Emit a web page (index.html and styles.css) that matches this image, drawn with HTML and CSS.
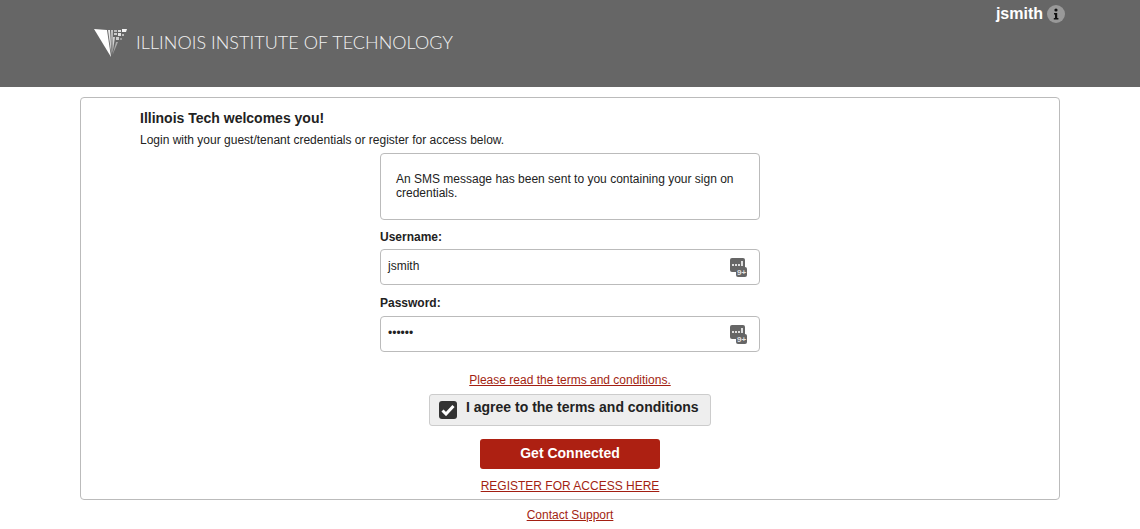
FILE: index.html
```html
<!DOCTYPE html>
<html lang="en">
<head>
  <meta charset="UTF-8" />
  <title>Illinois Tech Guest Access</title>
  <link rel="stylesheet" href="styles.css">
</head>
<body>
  <header class="topbar">
    <div class="brand">
      <svg class="brand-mark" width="34" height="30" viewBox="0 0 34 30">
        <polygon points="0,1 13,2 17,29" fill="#fff"/>
        <polygon points="14,2 16,2 17.5,27" fill="#e8e8e8"/>
        <polygon points="17,2 19,2 18,26" fill="#c8c8c8"/>
        <polygon points="19,9 21,9 18.5,25" fill="#d0d0d0"/>
        <polygon points="22,14 24,14 18.5,27" fill="#aaa"/>
        <rect x="20" y="2" width="3" height="2" fill="#bbb"/>
        <rect x="24" y="2" width="3" height="2" fill="#ddd"/>
        <polygon points="28,1 33,1 32,4 28,4" fill="#f4f4f4"/>
        <rect x="20" y="5" width="3" height="2" fill="#ccc"/>
        <rect x="24" y="5" width="3" height="3" fill="#e4e4e4"/>
        <rect x="28" y="6" width="2" height="2" fill="#bbb"/>
        <rect x="22" y="9" width="3" height="3" fill="#ccc"/>
        <rect x="26" y="10" width="2" height="2" fill="#999"/>
      </svg>
      <span class="brand-name">ILLINOIS INSTITUTE OF TECHNOLOGY</span>
    </div>
    <div class="user">
      <span class="user-name">jsmith</span>
      <span class="info-icon">
        <svg width="18" height="18" viewBox="0 0 18 18">
          <circle cx="9" cy="9" r="9" fill="#999"/>
          <circle cx="9" cy="5" r="1.6" fill="#111"/>
          <path d="M7 8h3.2v5H11.4v1.4H6.8V13H8V9.4H7z" fill="#111"/>
        </svg>
      </span>
    </div>
  </header>

  <main class="card">
    <h1 class="welcome">Illinois Tech welcomes you!</h1>
    <p class="intro">Login with your guest/tenant credentials or register for access below.</p>

    <form class="login">
      <div class="notice">An SMS message has been sent to you containing your sign on credentials.</div>

      <label class="field-label">Username:</label>
      <div class="field">
        <span class="field-value">jsmith</span>
        <svg class="field-icon" width="17" height="19" viewBox="0 0 17 19">
          <rect x="0" y="0" width="15" height="14" rx="2" fill="#666"/>
          <rect x="6" y="9" width="11" height="10" rx="2" fill="#666"/>
          <path d="M2 6h2v2H2zM5 6h2v2H5zM8 6h2v2H8zM11 3h2v5h-2z" fill="#ddd"/>
          <text x="7" y="17" class="sms-count">9+</text>
        </svg>
      </div>

      <label class="field-label field-label-second">Password:</label>
      <div class="field">
        <span class="field-value">••••••</span>
        <svg class="field-icon" width="17" height="19" viewBox="0 0 17 19">
          <rect x="0" y="0" width="15" height="14" rx="2" fill="#666"/>
          <rect x="6" y="9" width="11" height="10" rx="2" fill="#666"/>
          <path d="M2 6h2v2H2zM5 6h2v2H5zM8 6h2v2H8zM11 3h2v5h-2z" fill="#ddd"/>
          <text x="7" y="17" class="sms-count">9+</text>
        </svg>
      </div>

      <a class="terms-link" href="#">Please read the terms and conditions.</a>

      <div class="agree">
        <span class="checkbox">
          <svg width="14" height="12" viewBox="0 0 14 12">
            <path d="M1.5 6.5 5 10l7.5-8" fill="none" stroke="#fff" stroke-width="3"/>
          </svg>
        </span>
        <span class="agree-text">I agree to the terms and conditions</span>
      </div>

      <button class="connect" type="button">Get Connected</button>
      <a class="register" href="#">REGISTER FOR ACCESS HERE</a>
    </form>
  </main>

  <footer class="support">
    <a href="#">Contact Support</a>
  </footer>
</body>
</html>
```

FILE: styles.css
```css
html, body {
  height: 100%;
}

body {
  margin: 0;
  font-family: "Liberation Sans", Arial, sans-serif;
  font-size: 12px;
  color: #222;
  background: #fff;
  overflow: hidden;
}

.sms-count {
  font-family: "Liberation Sans", Arial, sans-serif;
  font-size: 8px;
  font-weight: bold;
  fill: #e4e4e4;
}

.topbar {
  height: 87px;
  background: #666;
  display: flex;
  justify-content: space-between;
  align-items: flex-start;
  padding: 0 75px 0 94px;
  box-sizing: border-box;
}

.brand {
  display: flex;
  align-items: flex-start;
  gap: 8px;
  padding-top: 28px;
}

.brand-mark {
  display: block;
}

.brand-name {
  margin-top: 3px;
  font-family: Lato, sans-serif;
  font-weight: 300;
  font-size: 18px;
  line-height: 22px;
  letter-spacing: 0.04px;
  color: #f2f2f2;
}

.user {
  display: flex;
  align-items: center;
  gap: 4px;
  padding-top: 5px;
}

.user-name {
  color: #fff;
  font-size: 16px;
  font-weight: bold;
}

.info-icon {
  display: flex;
}

.card {
  width: 980px;
  height: 403px;
  box-sizing: border-box;
  margin: 10px auto 0;
  padding: 12px 59px 0;
  border: 1px solid #bbb;
  border-radius: 4px;
}

.welcome {
  margin: 0;
  font-size: 14px;
  line-height: 17px;
  font-weight: bold;
}

.intro {
  margin: 5px 0 0;
  line-height: 16px;
}

.login {
  width: 380px;
  margin: 5px auto 0;
  display: flex;
  flex-direction: column;
  align-items: center;
}

.notice {
  width: 100%;
  height: 67px;
  box-sizing: border-box;
  padding: 18px 15px 0;
  border: 1px solid #bbb;
  border-radius: 4px;
  line-height: 14px;
}

.field-label {
  align-self: flex-start;
  margin-top: 10px;
  line-height: 14px;
  font-weight: bold;
}

.field-label-second {
  margin-top: 11px;
}

.field {
  width: 100%;
  height: 36px;
  box-sizing: border-box;
  margin-top: 5px;
  padding: 0 12px 0 7px;
  display: flex;
  align-items: center;
  justify-content: space-between;
  border: 1px solid #bbb;
  border-radius: 4px;
}

.field-label-second + .field {
  margin-top: 6px;
}

.field-value {
  margin-top: -2px;
  line-height: 14px;
}

.terms-link,
.register,
.support a {
  color: #a31f12;
  text-decoration: underline;
}

.terms-link {
  margin-top: 21px;
  line-height: 14px;
}

.agree {
  width: 282px;
  height: 32px;
  box-sizing: border-box;
  margin-top: 7px;
  padding: 0 9px;
  display: flex;
  align-items: center;
  gap: 9px;
  background: #eee;
  border: 1px solid #ccc;
  border-radius: 3px;
}

.checkbox {
  width: 18px;
  height: 18px;
  display: flex;
  align-items: center;
  justify-content: center;
  background: #333;
  border-radius: 3px;
}

.agree-text {
  font-size: 14px;
  font-weight: bold;
  white-space: nowrap;
  margin-top: -7px;
}

.connect {
  width: 180px;
  height: 30px;
  margin-top: 13px;
  padding: 0 0 2px;
  background: #ad2012;
  color: #fff;
  font-family: inherit;
  font-size: 14px;
  font-weight: bold;
  border: none;
  border-radius: 3px;
}

.register {
  margin-top: 10px;
  line-height: 14px;
}

.support {
  margin-top: 8px;
  text-align: center;
  line-height: 14px;
}
```
